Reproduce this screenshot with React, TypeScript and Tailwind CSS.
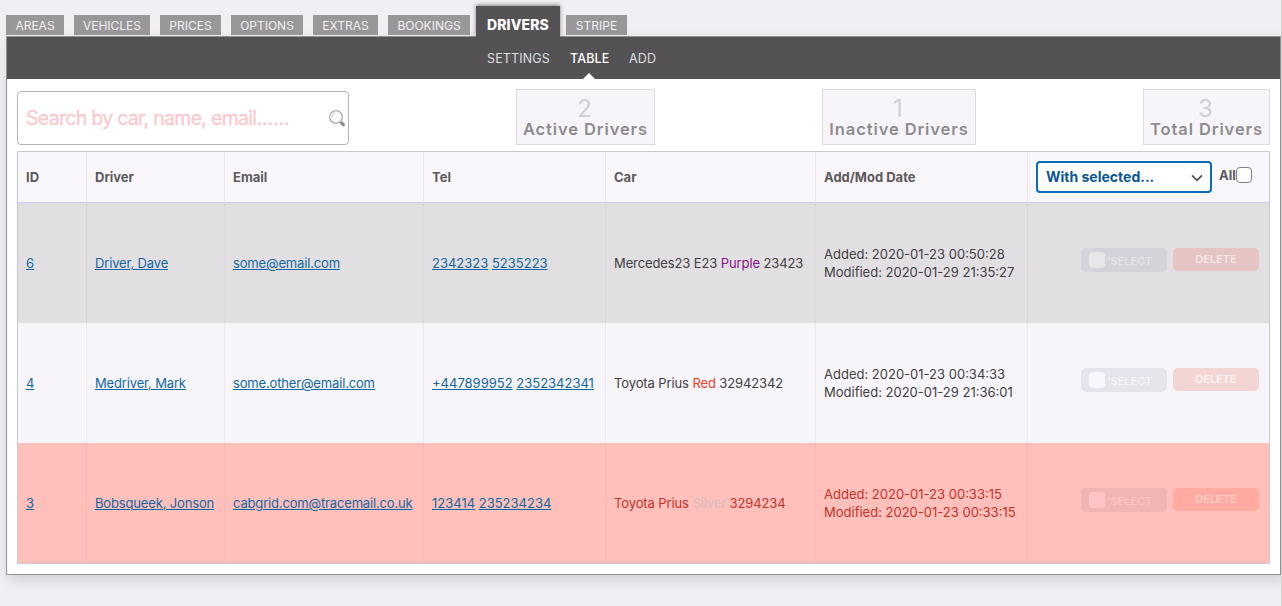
import React from "react";

const tabs = [
  { name: "AREAS", cls: "w-[58px]" },
  { name: "VEHICLES", cls: "w-[76px]" },
  { name: "PRICES", cls: "w-[61px]" },
  { name: "OPTIONS", cls: "w-[72px]" },
  { name: "EXTRAS", cls: "w-[65px]" },
  { name: "BOOKINGS", cls: "w-[82px]" },
];

const rows = [
  {
    id: "6", driver: "Driver, Dave", email: "some@email.com", tel: ["2342323", "5235223"],
    car: "Mercedes23 E23", colour: "Purple", colourCls: "text-[#8b108b]", plate: "23423",
    added: "2020-01-23 00:50:28", modified: "2020-01-29 21:35:27",
    row: "bg-[#e1dfe2] text-[#414042]", line: "border-[#d8d6da]",
    select: "bg-[#d5d2db]", box: "bg-[#e8e6e9]", selectText: "text-[#e8e6e9]", del: "bg-[#e6c4c1] text-[#f1e7e8]",
  },
  {
    id: "4", driver: "Medriver, Mark", email: "some.other@email.com", tel: ["+447899952", "2352342341"],
    car: "Toyota Prius", colour: "Red", colourCls: "text-[#f03a2c]", plate: "32942342",
    added: "2020-01-23 00:34:33", modified: "2020-01-29 21:36:01",
    row: "bg-[#f7f5f9] text-[#414042]", line: "border-[#ebe9ed]",
    select: "bg-[#e6e3ec]", box: "bg-[#f8f6fa]", selectText: "text-[#f8f6fa]", del: "bg-[#f3d6d4] text-[#fdf3f4]",
  },
  {
    id: "3", driver: "Bobsqueek, Jonson", email: "cabgrid.com@tracemail.co.uk", tel: ["123414", "235234234"],
    car: "Toyota Prius", colour: "Silver", colourCls: "text-[#d8bcbf]", plate: "3294234",
    added: "2020-01-23 00:33:15", modified: "2020-01-23 00:33:15",
    row: "bg-[#ffbfba] text-[#c5332c]", line: "border-[#f6b9b6]",
    select: "bg-[#f2b5b6]", box: "bg-[#ffc5c6]", selectText: "text-[#fdc5c4]", del: "bg-[#ffaba1] text-[#ffcdc8]",
  },
];

function Stat({ n, label, cls }: { n: string; label: string; cls: string }) {
  return (
    <div className={"flex h-14 flex-col items-center border border-[#dcdbdd] bg-[#f7f5f9] whitespace-nowrap " + cls}>
      <span className="mt-[7px] mr-[2px] text-[24px] leading-6 text-[#d0cfd1]">{n}</span>
      <span className="text-[16.5px] leading-4 font-semibold tracking-[0.9px] text-[#8d8c8f]">{label}</span>
    </div>
  );
}

function Magnifier() {
  return (
    <svg className="mt-[2px]" width="18" height="20" viewBox="0 0 18 20" fill="none">
      <circle cx="8" cy="8" r="6.4" stroke="#a9a8aa" strokeWidth="1.2" />
      <circle cx="8" cy="8" r="5.2" stroke="#dddcde" strokeWidth="0.8" />
      <path d="M4.1 8.5a4 4 0 0 1 3-4" stroke="#c4c3c5" strokeWidth="0.8" />
      <path d="M12.5 12.6l1.6 1.7" stroke="#b5b4b6" strokeWidth="1.6" />
      <path d="M13.9 14.2l1.4 1.4" stroke="#8b8a8c" strokeWidth="3.4" strokeLinecap="round" />
    </svg>
  );
}

export default function App() {
  const head = "border-r border-b border-r-[#ebe9ef] border-b-[#d1cdf2] px-2 py-0 text-left font-bold";
  const link = "text-[#1268a3] underline underline-offset-1 decoration-1";
  return (
    <div className="flex h-[606px] w-[1282px] overflow-hidden border-r border-[#cfced1] bg-[#f1eff3] pl-[6px] font-['Inter',sans-serif] text-[13px] leading-[18px] text-[#414042]">
      <div className="w-[1275px] shrink-0">
        <nav className="flex h-9 items-end whitespace-nowrap">
          <div className="mb-px flex gap-[10px]">
            {tabs.map((t) => (
              <div key={t.name} className={"flex h-5 items-center justify-center bg-[#99979a] pt-px text-[12px] text-[#f1eff3] " + t.cls}>
                {t.name}
              </div>
            ))}
          </div>
          <div className="relative z-10 ml-[6px] h-[31px] w-[84px] -mb-px shadow-[0_-1px_4px_rgba(0,0,0,0.45)] bg-[#545254] pt-[10px] text-center text-[14px] leading-[18px] font-extrabold tracking-[0.1px] text-white [clip-path:inset(-6px_-6px_0_-6px)]">
            DRIVERS
          </div>
          <div className="mb-px ml-[6px] flex h-5 w-[61px] items-center justify-center bg-[#99979a] pt-px text-[12px] text-[#f1eff3]">
            STRIPE
          </div>
        </nav>
        <main className="h-[539px] border border-[#929093] bg-white shadow-[3px_5px_12px_rgba(0,0,0,0.14)]">
          <div className="flex h-[42px] bg-[#545254] pl-[480px] pt-[13px] text-[12.5px] tracking-[0.15px] text-[#dedde0]">
            <span className="w-[83px]">SETTINGS</span>
            <span className="relative w-[59px] font-medium text-white">
              TABLE
              <svg className="absolute left-[13px] top-[23px]" width="12" height="6" viewBox="0 0 12 6">
                <path d="M0 6l6-6 6 6z" fill="#fff" />
              </svg>
            </span>
            <span>ADD</span>
          </div>
          <div className="px-[10px] pt-[10px]">
            <div className="flex h-[62px]">
              <div className="mt-[2px] flex h-[54px] w-[332px] items-center justify-between rounded border border-[#b5b4b7] pl-2 pr-[2px] text-[19.5px] text-[#fac9cd]">
                <span className="[-webkit-text-stroke:0.3px_#fac9cd]">
                  <span className="tracking-[-0.7px]">Search by car, name, email</span>
                  <span className="tracking-[-0.1px]">......</span>
                </span>
                <Magnifier />
              </div>
              <Stat n="2" label="Active Drivers" cls="ml-[167px] w-[139px]" />
              <Stat n="1" label="Inactive Drivers" cls="ml-[167px] w-[154px]" />
              <Stat n="3" label="Total Drivers" cls="ml-[167px] w-[127px]" />
            </div>
            <table className="h-[413px] w-[1253px] table-fixed border-separate border-spacing-0 border border-[#c9c8cb] whitespace-nowrap">
              <colgroup>
                <col className="w-[69px]" />
                <col className="w-[138px]" />
                <col className="w-[199px]" />
                <col className="w-[182px]" />
                <col className="w-[210px]" />
                <col className="w-[212px]" />
                <col className="w-[241px]" />
              </colgroup>
              <thead>
                <tr className="h-[51px] bg-[#f9f7fc] text-[#5b5a5c]">
                  {["ID", "Driver", "Email", "Tel", "Car", "Add/Mod Date"].map((h) => (
                    <th key={h} className={head}>{h}</th>
                  ))}
                  <th className="border-b border-[#d1cdf2] p-0 pl-2">
                    <div className="flex items-center">
                      <div className="flex h-8 w-[176px] items-center justify-between rounded border-2 border-[#0a6cb8] bg-white pl-2 pr-[7px] text-[14px] text-[#0a5592]">
                        <span>With selected...</span>
                        <svg className="mt-px" width="12" height="8" viewBox="0 0 12 8" fill="none">
                          <path d="M1 1.3l5 5 5-5" stroke="#515053" strokeWidth="1.7" />
                        </svg>
                      </div>
                      <span className="-mt-[4px] ml-[7px] w-[17px]">All</span>
                      <span className="-mt-1 size-4 rounded border border-[#7f7e81] bg-white" />
                    </div>
                  </th>
                </tr>
              </thead>
              <tbody>
                {rows.map((r) => {
                  const cell = "border-r px-2 py-0 " + r.line;
                  return (
                    <tr key={r.id} className={"h-[120px] " + r.row}>
                      <td className={cell}><a className={link}>{r.id}</a></td>
                      <td className={cell + " tracking-[-0.15px]"}><a className={link}>{r.driver}</a></td>
                      <td className={cell + " tracking-[-0.16px]"}><a className={link}>{r.email}</a></td>
                      <td className={cell}>
                        <a className={link}>{r.tel[0]}</a> <a className={link}>{r.tel[1]}</a>
                      </td>
                      <td className={cell + " tracking-[-0.11px]"}>
                        {r.car} <span className={r.colourCls}>{r.colour}</span> {r.plate}
                      </td>
                      <td className={cell}>
                        Added: {r.added}<br />Modified: {r.modified}
                      </td>
                      <td className="p-0">
                        <div className="-mt-[6px] flex gap-[6px] pl-[53px] text-[11px] font-medium">
                          <div className={"flex h-6 w-[86px] items-center rounded-[5px] pl-2 " + r.select + " " + r.selectText}>
                            <span className={"size-4 rounded " + r.box} />
                            <span className="ml-[2px] pt-[2px]">'SELECT</span>
                          </div>
                          <div className={"h-[23px] w-[86px] rounded-[5px] pt-[2px] text-center font-semibold " + r.del}>DELETE</div>
                        </div>
                      </td>
                    </tr>
                  );
                })}
              </tbody>
            </table>
          </div>
        </main>
      </div>
    </div>
  );
}
